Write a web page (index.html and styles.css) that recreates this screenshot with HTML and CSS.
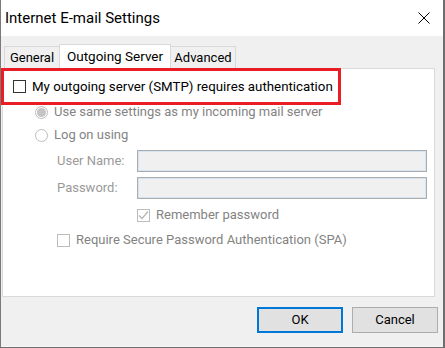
FILE: index.html
```html
<!DOCTYPE html>
<html lang="en">
<head>
    <meta charset="UTF-8">
    <title>Internet E-mail Settings</title>
    <link rel="stylesheet" href="styles.css">
</head>
<body>

    <div class="window">
        <div class="titlebar">
            <span class="title">Internet E-mail Settings</span>
            <svg class="close" width="12" height="12" viewBox="0 0 12 12">
                <path d="M0.5 0.5 L11.5 11.5 M11.5 0.5 L0.5 11.5" stroke="#000" stroke-width="1" fill="none"/>
            </svg>
        </div>

        <div class="body">
            <div class="tabs">
                <div class="tab tab-general">General</div>
                <div class="tab tab-active">Outgoing Server</div>
                <div class="tab tab-advanced">Advanced</div>
            </div>

            <div class="panel">
                <div class="highlight">
                    <span class="check"></span>
                    <span class="label-main">My outgoing server (SMTP) requires authentication</span>
                </div>

                <div class="row row-same">
                    <span class="radio radio-on"></span>
                    <span class="dim">Use same settings as my incoming mail server</span>
                </div>
                <div class="row row-logon">
                    <span class="radio"></span>
                    <span class="dim">Log on using</span>
                </div>

                <div class="field field-user">
                    <span class="field-label">User Name:</span>
                    <span class="input"></span>
                </div>
                <div class="field field-pass">
                    <span class="field-label">Password:</span>
                    <span class="input"></span>
                </div>

                <div class="row row-remember">
                    <span class="check check-dim">
                        <svg width="11" height="11" viewBox="0 0 11 11">
                            <path d="M1 5.5 L4 8.5 L10 1.5" stroke="#b4b4b4" stroke-width="1.2" fill="none"/>
                        </svg>
                    </span>
                    <span class="dim">Remember password</span>
                </div>
                <div class="row row-spa">
                    <span class="check check-dim"></span>
                    <span class="dim">Require Secure Password Authentication (SPA)</span>
                </div>
            </div>

            <div class="footer">
                <div class="btn btn-default">OK</div>
                <div class="btn">Cancel</div>
            </div>
        </div>
    </div>

</body>
</html>
```

FILE: styles.css
```css
body {
    margin: 0;
    font-family: 'Roboto', 'Noto Sans', sans-serif;
    font-size: 13px;
    color: #000;
    background-color: #fff;
    white-space: nowrap;
}

.window {
    width: 442px;
    height: 347px;
    border-left: 1px solid #7a7a7a;
    border-right: 2px solid #6e6e6e;
    border-bottom: 1px solid #6e6e6e;
    display: flex;
    flex-direction: column;
}

.titlebar {
    height: 36px;
    background-color: #fff;
    display: flex;
    align-items: center;
    justify-content: space-between;
    padding: 0 13px 0 4px;
}

.title {
    font-size: 15px;
    line-height: 20px;
    margin-top: -1px;
}

.close {
    margin-top: -1px;
}

.body {
    flex: 1;
    background-color: #f0f0f0;
    display: flex;
    flex-direction: column;
    padding-bottom: 4px;
    border-bottom: 1px solid #f8f8f8;
}

/* tabs */

.tabs {
    height: 32px;
    display: flex;
    align-items: flex-end;
    padding-left: 3px;
}

.tab {
    height: 22px;
    box-sizing: border-box;
    border: 1px solid #d9d9d9;
    border-bottom: none;
    background-color: #f0f0f0;
    display: flex;
    align-items: center;
    justify-content: center;
    line-height: 20px;
}

.tab-general {
    width: 55px;
    border-right: none;
}

.tab-advanced {
    width: 65px;
    border-left: none;
}

.tab-active {
    width: 112px;
    height: 25px;
    margin-bottom: -1px;
    background-color: #fff;
    position: relative;
    z-index: 1;
    padding-bottom: 3px;
    font-size: 13.5px;
}

/* panel */

.panel {
    width: 433px;
    height: 229px;
    box-sizing: border-box;
    margin-left: 1px;
    border: 1px solid #d9d9d9;
    background-color: #fff;
}

.highlight {
    width: 340px;
    height: 37px;
    box-sizing: border-box;
    margin: -1px 0 0 -2px;
    border: 3px solid #ea1c24;
    display: flex;
    align-items: center;
    padding-left: 9px;
    position: relative;
    z-index: 2;
}

.check {
    width: 13px;
    height: 13px;
    box-sizing: border-box;
    border: 1px solid #333;
    background-color: #fff;
    flex-shrink: 0;
    display: flex;
    align-items: center;
    justify-content: center;
}

.check-dim {
    border-color: #bcbcbc;
}

.label-main {
    margin-left: 6px;
    line-height: 20px;
    font-size: 13.3px;
}

.row {
    height: 20px;
    display: flex;
    align-items: center;
}

.row-same {
    margin-top: -3px;
    padding-left: 32px;
}

.row-logon {
    margin-top: 3px;
    padding-left: 32px;
}

.row-remember {
    margin-top: 6px;
    padding-left: 134px;
}

.row-spa {
    margin-top: 5px;
    padding-left: 54px;
}

.radio {
    width: 13px;
    height: 13px;
    box-sizing: border-box;
    border: 1px solid #bcbcbc;
    border-radius: 50%;
    background-color: #fff;
    flex-shrink: 0;
    display: flex;
    align-items: center;
    justify-content: center;
}

.radio-on::after {
    content: "";
    width: 9px;
    height: 9px;
    border-radius: 50%;
    background-color: #c4c4c4;
}

.dim {
    color: #838383;
    margin-left: 6px;
    line-height: 20px;
}

.field {
    display: flex;
    align-items: center;
    padding-left: 54px;
}

.field-user {
    margin-top: 5px;
}

.field-pass {
    margin-top: 5px;
}

.field-label {
    width: 80px;
    color: #9a9a9a;
    line-height: 20px;
}

.input {
    width: 290px;
    height: 22px;
    box-sizing: border-box;
    border: 1px solid #acacac;
    background-color: #f0f0f0;
    box-shadow: inset 0 0 0 1px #d5e4f3;
}

/* footer */

.footer {
    display: flex;
    justify-content: flex-end;
    gap: 9px;
    padding: 10px 5px 0 0;
}

.btn {
    width: 86px;
    height: 26px;
    box-sizing: border-box;
    border: 1px solid #adadad;
    background-color: #e1e1e1;
    display: flex;
    align-items: center;
    justify-content: center;
    line-height: 20px;
}

.btn-default {
    border: 2px solid #0078d7;
}
```
